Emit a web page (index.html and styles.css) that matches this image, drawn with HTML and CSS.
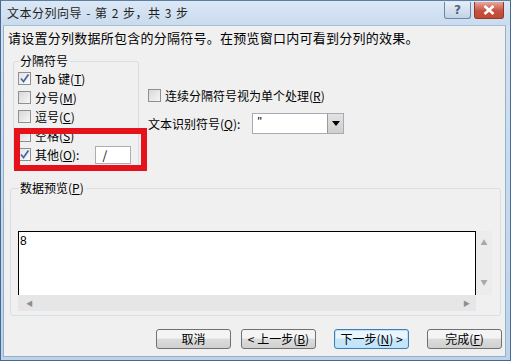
FILE: index.html
```html
<!DOCTYPE html>
<html lang="zh-CN">
<head>
  <meta charset="UTF-8" />
  <title>文本分列向导</title>
  <link rel="stylesheet" href="styles.css">
</head>
<body>
  <div class="window">
    <div class="titlebar">
      <span class="title">文本分列向导 - 第 2 步，共 3 步</span>
      <div class="caption-btns">
        <span class="cap help">?</span>
        <span class="cap close">
          <svg width="12" height="10" viewBox="0 0 12 10"><path d="M1.5 1 L10.5 9 M10.5 1 L1.5 9" stroke="#fff" stroke-width="2.6" /></svg>
        </span>
      </div>
    </div>
    <div class="client">
      <p class="intro">请设置分列数据所包含的分隔符号。在预览窗口内可看到分列的效果。</p>
      <div class="top">
        <fieldset class="group delim">
          <legend>分隔符号</legend>
          <label class="row"><span class="cb checked"><svg width="11" height="11" viewBox="0 0 11 11"><path d="M2 5.5 L4.5 8.5 L9.5 1.5" fill="none" stroke="#4b6aa8" stroke-width="1.8" /></svg></span>Tab 键(<u>T</u>)</label>
          <label class="row"><span class="cb"></span>分号(<u>M</u>)</label>
          <label class="row"><span class="cb"></span>逗号(<u>C</u>)</label>
          <label class="row"><span class="cb"></span>空格(<u>S</u>)</label>
          <label class="row"><span class="cb checked"><svg width="11" height="11" viewBox="0 0 11 11"><path d="M2 5.5 L4.5 8.5 L9.5 1.5" fill="none" stroke="#4b6aa8" stroke-width="1.8" /></svg></span>其他(<u>O</u>):<span class="other-input">/</span></label>
        </fieldset>
        <div class="options">
          <label class="row"><span class="cb"></span>连续分隔符号视为单个处理(<u>R</u>)</label>
          <div class="qualifier">
            <span>文本识别符号(<u>Q</u>):</span>
            <div class="select">
              <span class="val">"</span>
              <span class="drop"><svg width="8" height="5" viewBox="0 0 8 5"><path d="M0 0 H8 L4 5 Z" fill="#000" /></svg></span>
            </div>
          </div>
        </div>
      </div>
      <fieldset class="group preview">
        <legend>数据预览(<u>P</u>)</legend>
        <div class="grid-view">
          <div class="cells">8</div>
          <div class="vscroll"><span>▲</span><span>▼</span></div>
          <div class="hscroll"><span>◀</span><span>▶</span></div>
          <div class="corner"></div>
        </div>
      </fieldset>
      <div class="buttons">
        <button class="btn">取消</button>
        <button class="btn">&lt; 上一步(<u>B</u>)</button>
        <button class="btn default">下一步(<u>N</u>) &gt;</button>
        <button class="btn">完成(<u>F</u>)</button>
      </div>
      <div class="highlight"></div>
    </div>
  </div>
</body>
</html>
```

FILE: styles.css
```css
body { margin: 0; font-family: "Noto Sans CJK SC", "Liberation Sans", sans-serif; font-size: 12px; color: #000; }
.window { width: 511px; height: 361px; box-sizing: border-box; background: linear-gradient(#d3e3f3, #bcd3ea); border: 1px solid #47698f; border-top-color: #5e7ea3; display: flex; flex-direction: column; }
.titlebar { height: 24px; display: flex; align-items: center; justify-content: space-between; padding: 0 6px 0 6px; background: linear-gradient(#dbe8f5, #c9dbee); }
.title { font-size: 12px; color: #1e1e1e; line-height: 14px; margin-top: -1px; letter-spacing: 0.5px; word-spacing: 1px; }
.caption-btns { display: flex; gap: 3px; align-self: flex-start; margin-top: 1px; }
.cap { height: 17px; border: 1px solid #6d87a7; border-top: none; border-radius: 0 0 3px 3px; display: flex; align-items: center; justify-content: center; box-sizing: border-box; }
.help { width: 27px; background: linear-gradient(#e6eef7, #c3d3e6); color: #4d6584; font-family: "DejaVu Sans", sans-serif; font-size: 12px; font-weight: bold; }
.close { width: 30px; background: linear-gradient(#e5a79c, #c65240 55%, #c2492f); border-color: #8c3a2f; }
.client { position: relative; margin: 0 4px 3px 2px; flex: 1; background: #f0f0f0; border: 1px solid #97afc8; border-top-color: #a8bed6; box-sizing: border-box; }
.intro { margin: 4px 0 0 4px; font-size: 13px; line-height: 16px; letter-spacing: 0.25px; }
.top { display: flex; margin-top: 8px; }
.group { margin: 0; border: 1px solid #d5dfe5; border-radius: 3px; }
.group legend { padding: 0 2px 0 1px; margin-left: 1px; line-height: 14px; }
.delim { margin-left: 9px; width: 126px; box-sizing: border-box; padding: 1px 3px 4px 4px; }
.row { display: flex; align-items: center; height: 19px; white-space: nowrap; }
.cb { width: 13px; height: 13px; box-sizing: border-box; border: 1px solid #8f8f8f; background: linear-gradient(135deg, #d8d8d8, #f6f6f6); margin-right: 4px; display: flex; align-items: center; justify-content: center; flex: none; }
.cb.checked { background: linear-gradient(135deg, #e4e4e4, #fbfbfb); }
.other-input { margin-left: 16px; width: 36px; height: 18px; box-sizing: border-box; border: 1px solid #abadb3; background: #fff; padding-left: 6px; line-height: 16px; }
.options { margin-left: 9px; padding-top: 32px; }
.qualifier { display: flex; align-items: center; margin-top: 8px; }
.select { margin-left: 12px; width: 92px; height: 21px; box-sizing: border-box; border: 1px solid #a5acb5; background: #fff; display: flex; justify-content: space-between; }
.select .val { padding-left: 4px; line-height: 17px; font-family: "Liberation Sans", sans-serif; }
.drop { width: 15px; background: linear-gradient(#e2e2e2, #cfcfcf); border-left: 1px solid #9a9a9a; display: flex; align-items: center; justify-content: center; }
.preview { margin: 12px 0 0 6px; width: 491px; box-sizing: border-box; padding: 36px 7px 4px 7px; }
.grid-view { display: grid; grid-template-columns: 458px 16px; grid-template-rows: 64px 16px; }
.cells { background: #fff; border: 1px solid #000; border-bottom: none; padding: 2px 0 0 1px; font-family: "Liberation Sans", sans-serif; font-size: 12px; line-height: 14px; }
.vscroll { background: #ececec; display: flex; flex-direction: column; justify-content: space-between; align-items: center; color: #a7a7a7; font-size: 7px; padding: 6px 0 8px; box-sizing: border-box; }
.hscroll { background: #e6e6e6; display: flex; justify-content: space-between; align-items: center; color: #8e8e8e; font-size: 7px; padding: 0 6px 0 8px; }
.corner { background: #f0f0f0; }
.buttons { display: flex; justify-content: flex-end; margin-top: 13px; padding-right: 3px; }
.btn { width: 75px; height: 20px; margin-left: 18px; font-family: inherit; font-size: 12px; line-height: 14px; padding: 0; border: 1px solid #707070; border-radius: 3px; background: linear-gradient(#f4f4f4 45%, #dcdcdc 50%, #d0d0d0); color: #000; }
.btn:first-child { margin-left: 0; }
.btn:nth-child(2) { margin-left: 10px; }
.btn.default { border-color: #3c7fb1; background: linear-gradient(#eaf6fd 45%, #c8e6f8 50%, #bee6fd); box-shadow: inset 0 0 0 1px #bfe2f8; }
.highlight { position: absolute; left: 10px; top: 102px; width: 133px; height: 43px; box-sizing: border-box; border: 6px solid #e5121b; }
```
